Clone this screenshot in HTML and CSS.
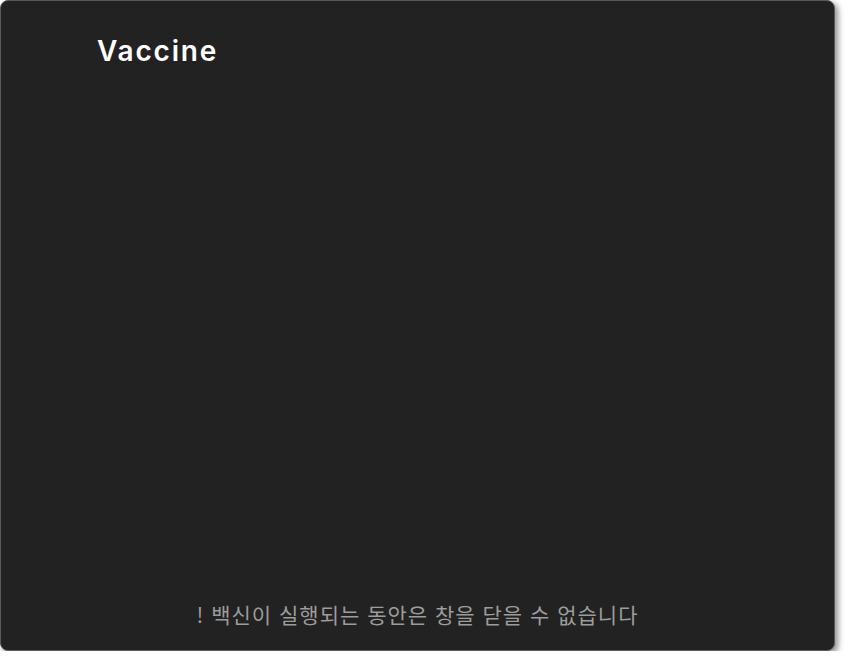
FILE: index.html
```html
<!DOCTYPE html>
<html lang="ko">
<head>
<meta charset="utf-8">
<link rel="stylesheet" href="styles.css">
</head>
<body>
<div class="panel">
  <h1 class="title">Vaccine</h1>
  <p class="notice">! 백신이 실행되는 동안은 창을 닫을 수 없습니다</p>
</div>
</body>
</html>
```
FILE: styles.css
```css
html, body {
  margin: 0;
  padding: 0;
  background: #ffffff;
}
.panel {
  box-sizing: border-box;
  width: 835px;
  height: 651px;
  background: #222222;
  border: 1px solid #5a5a5a;
  border-radius: 8px;
  box-shadow: 3px 3px 6px rgba(0, 0, 0, 0.45);
  display: flex;
  flex-direction: column;
}
.title {
  margin: 0;
  padding: 30px 0 0 96px;
  font-family: "Inter", "Noto Sans", sans-serif;
  font-weight: 600;
  font-size: 28px;
  letter-spacing: 1.8px;
  line-height: 40px;
  color: #ffffff;
}
.notice {
  margin: auto 0 0 0;
  padding-bottom: 23px;
  text-align: center;
  font-family: "Noto Sans CJK KR", "Noto Sans", sans-serif;
  font-size: 21px;
  letter-spacing: 1px;
  line-height: 26px;
  color: #9c9c9c;
}
```
